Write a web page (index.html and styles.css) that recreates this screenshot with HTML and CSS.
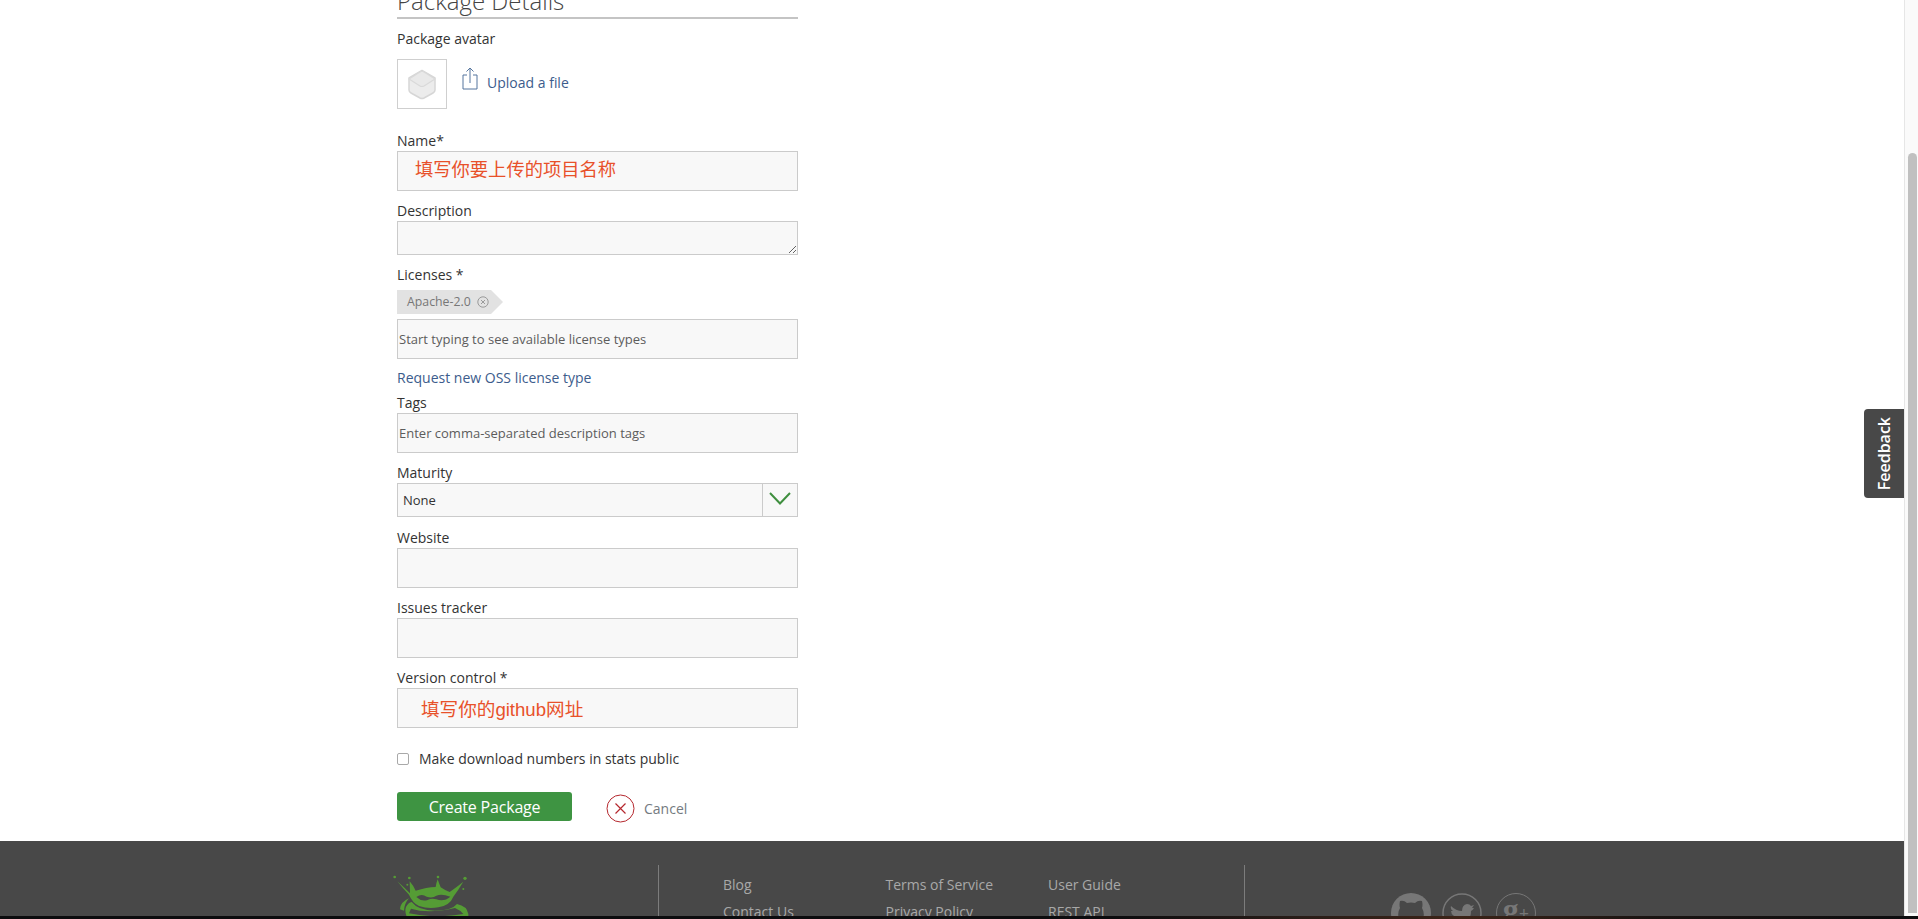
FILE: index.html
```html
<!DOCTYPE html>
<html lang="en">
<head>
  <meta charset="UTF-8" />
  <title>Package Details</title>
  <meta name="viewport" content="width=device-width, initial-scale=1.0" />
  <link rel="stylesheet" href="styles.css">
</head>
<body>
  <div class="window">
    <div class="page">
      <main class="content">
        <form class="package-form">
          <h2 class="form-title">Package Details</h2>

          <div class="row avatar-row">
            <label>Package avatar</label>
            <div class="avatar-line">
              <div class="avatar-box">
                <svg width="32" height="32" viewBox="0 0 32 32">
                  <path d="M16 2.5 L29 10 V22 Q29 24 27 25 L18 30 Q16 31 14 30 L5 25 Q3 24 3 22 V10 Z" fill="#ececec" stroke="#d6d6d6" stroke-width="1.5" stroke-linejoin="round"/>
                  <path d="M3 11 L14 4 Q16 2.5 18 4 L29 11 L18 18 Q16 19 14 18 Z" fill="#e9e9e9" stroke="#d9d9d9" stroke-width="1.2" stroke-linejoin="round"/>
                </svg>
              </div>
              <svg class="upload-icon" width="16" height="23" viewBox="0 0 16 23">
                <path d="M5 8 H1 V22 H15 V8 H11" fill="none" stroke="#55759e" stroke-width="1"/>
                <path d="M8 16 V1 M4.5 4.5 L8 1 L11.500 4.500" fill="none" stroke="#55759e" stroke-width="1"/>
              </svg>
              <a class="link" href="#">Upload a file</a>
            </div>
          </div>

          <div class="row">
            <label>Name*</label>
            <div class="field note-name">填写你要上传的项目名称</div>
          </div>

          <div class="row">
            <label>Description</label>
            <textarea class="description"></textarea>
          </div>

          <div class="row licenses-row">
            <label>Licenses *</label>
            <div class="tag">Apache-2.0
              <svg width="12" height="12" viewBox="0 0 12 12">
                <circle cx="6" cy="6" r="5.200" fill="none" stroke="#888" stroke-width="0.8"/>
                <path d="M4 4 L8 8 M8 4 L4 8" stroke="#888" stroke-width="0.8"/>
              </svg>
            </div>
            <div class="field hint">Start typing to see available license types</div>
          </div>

          <a class="link request-link" href="#">Request new OSS license type</a>

          <div class="row">
            <label>Tags</label>
            <div class="field hint">Enter comma-separated description tags</div>
          </div>

          <div class="row">
            <label>Maturity</label>
            <div class="select">
              <span class="select-value">None</span>
              <span class="select-arrow">
                <svg width="22" height="13" viewBox="0 0 22 13">
                  <path d="M1 1 L11 11.500 L21 1" fill="none" stroke="#3f8f3f" stroke-width="2"/>
                </svg>
              </span>
            </div>
          </div>

          <div class="row website-row">
            <label>Website</label>
            <input class="field" type="text">
          </div>

          <div class="row">
            <label>Issues tracker</label>
            <input class="field" type="text">
          </div>

          <div class="row">
            <label>Version control *</label>
            <div class="field note-vcs">填写你的github网址</div>
          </div>

          <div class="check-row">
            <input class="check" type="checkbox">
            <span>Make download numbers in stats public</span>
          </div>

          <div class="actions">
            <button class="btn-create" type="button">Create Package</button>
            <a class="cancel" href="#">
              <svg width="29" height="29" viewBox="0 0 29 29">
                <circle cx="14.500" cy="14.500" r="13.500" fill="none" stroke="#b5282e" stroke-width="1"/>
                <path d="M9.500 9.500 L19.500 19.500 M19.500 9.500 L9.500 19.500" stroke="#b5282e" stroke-width="1.200"/>
              </svg>
              <span>Cancel</span>
            </a>
          </div>
        </form>
      </main>

      <footer class="footer">
        <div class="footer-logo">
          <svg width="80" height="41" viewBox="-15 105 240 123">
            <g fill="#559c35">
              <circle cx="-1" cy="111" r="4"/>
              <circle cx="43" cy="114" r="4"/>
              <circle cx="129" cy="111" r="4"/>
              <circle cx="210" cy="115" r="5"/>
              <circle cx="205" cy="147" r="3"/>
              <circle cx="37" cy="134" r="3"/>
              <path d="M7 124 Q30 145 45 160 L44 124 Q56 138 62 152 Q95 142 122 141 Q124 128 128 118 Q132 130 137 142 Q148 150 164 156 Q184 142 205 125 Q190 150 175 170 Q165 196 130 202 Q100 208 72 198 Q52 188 42 164 Q24 146 7 124 Z"/>
              <path d="M15 208 Q16 186 42 175 Q28 190 27 212 Z"/>
              <path d="M33 201 Q40 188 50 186 Q70 212 120 212 Q170 212 186 192 Q216 198 220 222 L220 232 L36 232 Q28 214 33 201 Z"/>
            </g>
            <path d="M64 171 Q80 160 95 170 Q112 176 124 167 Q140 160 166 170 Q148 186 124 178 Q110 174 98 180 Q80 186 64 171 Z" fill="#484848"/>
            <path d="M48 206 Q100 222 180 204 Q195 210 205 222 Q120 236 42 220 Z" fill="#484848"/>
          </svg>
        </div>
        <div class="footer-links">
          <ul>
            <li>Blog</li>
            <li>Contact Us</li>
          </ul>
          <ul>
            <li>Terms of Service</li>
            <li>Privacy Policy</li>
          </ul>
          <ul>
            <li>User Guide</li>
            <li>REST API</li>
          </ul>
        </div>
        <div class="footer-social">
          <svg width="40" height="40" viewBox="0 0 40 40">
            <circle cx="20" cy="20" r="20" fill="#777"/>
            <path d="M9 8 Q13 7 16 10 Q20 9 24 10 Q27 7 31 8 Q32 12 31 15 Q34 20 32 26 L32 40 L8 40 L8 26 Q6 20 9 15 Q8 12 9 8 Z" fill="#484848"/>
          </svg>
          <svg width="40" height="40" viewBox="0 0 40 40">
            <circle cx="20" cy="20" r="19" fill="none" stroke="#777" stroke-width="1.500"/>
            <path d="M9 13 Q14 18 20 18 Q20 12 25 11 Q28 11 29 13 L32 12 L30 15 L32 15 Q31 17 29 18 Q29 28 20 31 Q14 33 8 29 Q13 29 15 27 Q11 26 10 23 L12 23 Q9 21 9 18 L11 18 Q8 16 9 13 Z" fill="#777"/>
          </svg>
          <div class="gplus">g<span>+</span></div>
        </div>
      </footer>
    </div>

    <div class="scrollbar"><div class="thumb"></div></div>
  </div>
  <div class="taskbar"></div>
  <a class="feedback" href="#"><span>Feedback</span></a>
</body>
</html>
```

FILE: styles.css
```css
:root {
  --field-bg: #f8f8f8;
  --field-border: #cbcbcb;
  --link: #3c5c8c;
  --text-dark: #333333;
  --note: #e8512a;
  --footer-bg: #484848;
  --footer-text: #a8a8a8;
}

* {
  box-sizing: border-box;
}

html, body {
  margin: 0;
  padding: 0;
  height: 919px;
  overflow: hidden;
}

body {
  background: #ffffff;
  color: var(--text-dark);
  font-family: "Open Sans", "Noto Sans", sans-serif;
  font-size: 14px;
}

.window {
  display: flex;
  height: 916px;
}

.page {
  flex: 1;
  min-width: 0;
  overflow: hidden;
}

.content {
  padding-left: 397px;
}

.package-form {
  width: 401px;
  padding-bottom: 20px;
}

.form-title {
  margin: -15px 0 0 0;
  height: 34px;
  font-size: 24px;
  font-weight: 300;
  line-height: 32px;
  border-bottom: 2px solid #c4c4c4;
  color: #444;
}

.row {
  margin-top: 10px;
}

.row label {
  display: block;
  height: 20px;
  line-height: 20px;
}

.avatar-row {
  margin-bottom: 22px;
}

.avatar-line {
  display: flex;
  align-items: flex-start;
  margin-top: 10px;
}

.avatar-box {
  width: 50px;
  height: 50px;
  border: 1px solid #cfcfcf;
  display: flex;
  align-items: center;
  justify-content: center;
}

.upload-icon {
  margin: 8px 9px 0 15px;
}

.link {
  color: var(--link);
  text-decoration: none;
  line-height: 20px;
}

.avatar-line .link {
  margin-top: 14px;
}

.field {
  display: block;
  width: 100%;
  height: 40px;
  background: var(--field-bg);
  border: 1px solid var(--field-border);
  padding: 0;
  font-family: inherit;
  outline: none;
}

.note-name, .note-vcs {
  color: var(--note);
  font-family: "Liberation Sans", "Noto Sans CJK SC", sans-serif;
}

.note-name {
  padding-left: 17px;
  font-size: 18.300px;
  line-height: 36px;
}

.note-vcs {
  padding-left: 23px;
  font-size: 18.600px;
  line-height: 42px;
}

.hint {
  font-size: 13px;
  color: #5c5c5c;
  padding-left: 1px;
  line-height: 38px;
}

.description {
  display: block;
  width: 100%;
  height: 34px;
  background: var(--field-bg);
  border: 1px solid var(--field-border);
  outline: none;
  resize: vertical;
}

.tag {
  position: relative;
  width: 94px;
  height: 24px;
  margin: 5px 0;
  padding-left: 10px;
  background: #e2e2e2;
  color: #777;
  font-size: 12.300px;
  line-height: 24px;
}

.tag svg {
  margin-left: 3px;
  vertical-align: -2px;
}

.tag::after {
  content: "";
  position: absolute;
  left: 100%;
  top: 0;
  border-left: 12px solid #e2e2e2;
  border-top: 12px solid transparent;
  border-bottom: 12px solid transparent;
}

.request-link {
  display: block;
  height: 20px;
  margin: 9px 0 5px 0;
}

.request-link + .row {
  margin-top: 0;
}

.select {
  display: flex;
  height: 34px;
  background: var(--field-bg);
  border: 1px solid var(--field-border);
}

.select-value {
  flex: 1;
  padding-left: 5px;
  font-size: 13px;
  line-height: 32px;
}

.select-arrow {
  width: 35px;
  border-left: 1px solid var(--field-border);
  display: flex;
  align-items: center;
  justify-content: center;
  padding-bottom: 3px;
}

.website-row {
  margin-top: 11px;
}

.check-row {
  display: flex;
  align-items: center;
  height: 20px;
  margin-top: 20px;
}

.check {
  appearance: none;
  width: 12px;
  height: 12px;
  margin: 1px 10px 0 0;
  background: #ffffff;
  border: 1px solid #a9a9a9;
  border-radius: 2px;
}

.actions {
  display: flex;
  align-items: flex-start;
  height: 29px;
  margin-top: 24px;
}

.btn-create {
  width: 175px;
  height: 29px;
  padding: 0;
  background: #3e9442;
  color: #ffffff;
  border: none;
  border-radius: 3px;
  font-family: inherit;
  font-size: 16px;
  letter-spacing: -0.2px;
}

.cancel {
  display: flex;
  align-items: center;
  margin: 2px 0 0 34px;
  color: #747a80;
  text-decoration: none;
}

.cancel span {
  margin-left: 9px;
}

.footer {
  display: flex;
  height: 75px;
  padding: 24px 0 0 390px;
  background: var(--footer-bg);
  color: var(--footer-text);
  overflow: hidden;
}

.footer-logo {
  width: 268px;
  padding-top: 10px;
}

.footer-logo svg {
  display: block;
}

.footer-links {
  display: flex;
  width: 587px;
  padding-left: 64px;
  height: 200px;
  border-left: 1px solid #7c7c7c;
  border-right: 1px solid #7c7c7c;
}

.footer-links ul {
  width: 162.500px;
  margin: 0;
  padding: 10px 0 0 0;
  list-style: none;
}

.footer-links li {
  height: 27px;
  line-height: 20px;
}

.footer-social {
  display: flex;
  gap: 11px;
  padding: 28px 0 0 146px;
}

.footer-social svg {
  flex: none;
}

.gplus {
  width: 40px;
  height: 40px;
  margin-left: 3px;
  border: 1.500px solid #777;
  border-radius: 50%;
  color: #777;
  font-family: "Liberation Serif", serif;
  font-size: 32px;
  font-weight: bold;
  line-height: 30px;
  text-align: center;
}

.gplus span {
  font-size: 18px;
}

.scrollbar {
  width: 14px;
  height: 916px;
  background: #fafafa;
  border-left: 1px solid #e6e6e6;
  padding: 153px 1px 0 3px;
}

.thumb {
  height: 760px;
  background: #c0c0c0;
  border-radius: 5px 5px 0 0;
}

.taskbar {
  height: 3px;
  background: linear-gradient(90deg, #0c0c0e 0, #0c0c0e 58%, #2a1d18 68%, #3c2418 76%, #1a1412 86%, #0c0c0e 100%);
}

.feedback {
  position: fixed;
  top: 409px;
  left: 1864px;
  width: 40px;
  height: 89px;
  background: #484848;
  border-radius: 4px 0 0 4px;
  color: #ffffff;
  text-decoration: none;
  display: flex;
  align-items: center;
  justify-content: center;
  padding-right: 1px;
}

.feedback span {
  writing-mode: vertical-rl;
  transform: rotate(180deg);
  font-size: 16px;
  font-weight: 600;
}
```
